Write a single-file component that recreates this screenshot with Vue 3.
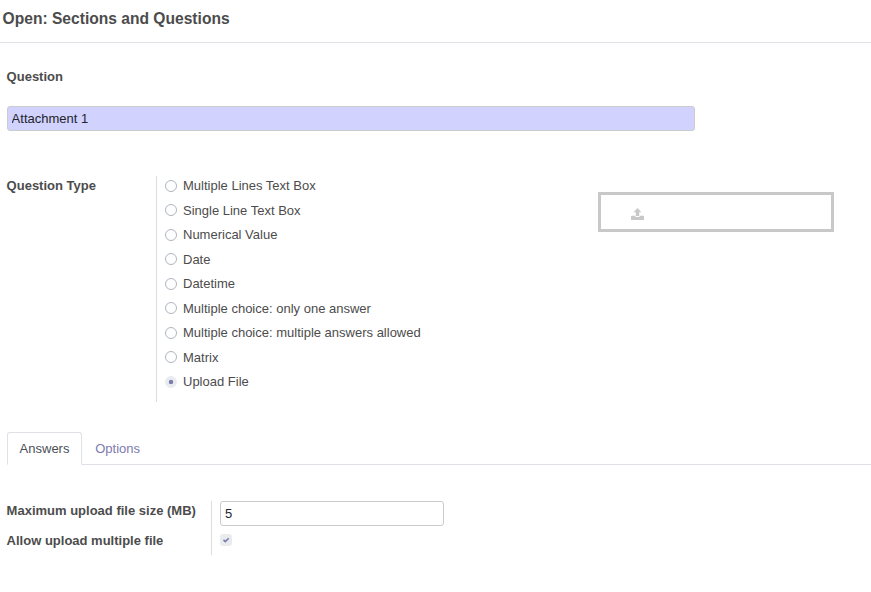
<script setup>
import { ref } from 'vue'

const title = ref('Attachment 1')
const types = [
  'Multiple Lines Text Box',
  'Single Line Text Box',
  'Numerical Value',
  'Date',
  'Datetime',
  'Multiple choice: only one answer',
  'Multiple choice: multiple answers allowed',
  'Matrix',
  'Upload File',
]
const selected = ref('Upload File')
const tabs = ['Answers', 'Options']
const activeTab = ref('Answers')
const maxSize = ref('5')
const multiple = ref(true)
</script>

<template>
  <div class="dialog">
    <header class="header">
      <h4 class="heading">Open: Sections and Questions</h4>
    </header>
    <main class="body">
      <label class="label question-label">Question</label>
      <input v-model="title" class="input required" type="text" />

      <section class="type-row">
        <div class="label type-label">Question Type</div>
        <div class="radios">
          <label v-for="t in types" :key="t" class="radio">
            <input v-model="selected" type="radio" name="type" :value="t" class="native" />
            <span class="dot" :class="{ on: selected === t }"></span>
            <span class="radio-text">{{ t }}</span>
          </label>
        </div>
        <div class="preview">
          <svg class="upload" viewBox="0 0 13 12" width="13" height="12">
            <path d="M6.5 0 L10.4 4.3 H8.2 V8 H4.8 V4.3 H2.6 Z" />
            <path d="M.6 7.8 H4 Q4.4 9 5.2 9 H7.8 Q8.6 9 9 7.8 H12.4 Q13 7.8 13 8.4 V11.4 Q13 12 12.4 12 H.6 Q0 12 0 11.4 V8.4 Q0 7.8 .6 7.8 Z" />
          </svg>
        </div>
      </section>

      <nav class="tabs">
        <a
          v-for="tab in tabs"
          :key="tab"
          class="tab"
          :class="{ active: activeTab === tab }"
          @click="activeTab = tab"
        >{{ tab }}</a>
      </nav>

      <section class="group">
        <div class="group-labels">
          <label class="label size-label">Maximum upload file size (MB)</label>
          <label class="label">Allow upload multiple file</label>
        </div>
        <div class="group-fields">
          <input v-model="maxSize" class="input size" type="text" />
          <label class="check">
            <input v-model="multiple" type="checkbox" class="native" />
            <svg v-if="multiple" viewBox="0 0 12 12" width="12" height="12">
              <path d="M3.5 5.9 L5.3 7.6 L8.7 4.2" />
            </svg>
          </label>
        </div>
      </section>
    </main>
  </div>
</template>

<style>
body {
  background: #fff;
}
</style>

<style scoped>
.dialog {
  height: 592px;
  overflow: hidden;
  font-family: "Liberation Sans", Arial, sans-serif;
  font-size: 13px;
  line-height: 20px;
  color: #4c4c4c;
}
.header {
  box-sizing: border-box;
  height: 43px;
  padding: 8px 2.6px 0;
  border-bottom: 1px solid #dee2e6;
}
.heading {
  margin: 0;
  font-size: 15.6px;
  line-height: 21px;
  font-weight: bold;
}
.body {
  padding: 24px 0 0 7px;
}
.label {
  display: block;
  margin-left: -0.4px;
  font-weight: bold;
  white-space: nowrap;
}
.question-label {
  margin-bottom: 19px;
}
.input {
  display: block;
  box-sizing: border-box;
  height: 25px;
  margin: 0;
  padding: 0 4px;
  border: 1px solid #ccc;
  border-radius: 3px;
  outline: none;
  background: #fff;
  color: #212529;
  font: inherit;
}
.required {
  width: 688px;
  padding-left: 3.6px;
  background: #d2d2ff;
}
.type-row {
  display: flex;
  align-items: flex-start;
  margin-top: 45px;
}
.type-label {
  width: 149.4px;
}
.radios {
  box-sizing: border-box;
  width: 442px;
  height: 226px;
  padding-left: 8px;
  border-left: 1px solid #ddd;
}
.radio {
  display: flex;
  align-items: center;
  gap: 6px;
  height: 19.5px;
  margin-bottom: 5px;
}
.radio-text {
  padding-top: 0.6px;
}
.native {
  display: none;
}
.dot {
  box-sizing: border-box;
  width: 12px;
  height: 12px;
  border: 1px solid #adb5bd;
  border-radius: 50%;
}
.dot.on {
  border-color: #e9ecef;
  background: radial-gradient(circle, #7c7bad 1.9px, #e9ecef 2.6px);
}
.preview {
  box-sizing: border-box;
  display: flex;
  width: 236px;
  height: 40px;
  margin-top: 16px;
  padding: 13px 30px 0;
  border: 3px solid #c8c8c8;
}
.upload {
  fill: #c8c8c8;
}
.tabs {
  display: flex;
  gap: 0.6px;
  height: 33px;
  margin-top: 30px;
  box-shadow: inset 0 -1px #dee2e6;
}
.tab {
  box-sizing: border-box;
  height: 33px;
  padding: 6px 11.6px 0;
  border: 1px solid transparent;
  border-radius: 3px 3px 0 0;
  color: #7c7bad;
  cursor: pointer;
}
.tab.active {
  border-color: #dee2e6;
  border-bottom-color: #fff;
  background: #fff;
  color: #495057;
}
.group {
  display: flex;
  margin-top: 36px;
}
.group-labels {
  width: 204px;
}
.size-label {
  margin-bottom: 10px;
}
.group-fields {
  box-sizing: border-box;
  height: 54px;
  padding-left: 8px;
  border-left: 1px solid #ddd;
}
.size {
  width: 224px;
}
.check {
  display: block;
  width: 12px;
  height: 12px;
  margin-top: 8px;
  border-radius: 3px;
  background: #e9ecef;
}
.check svg {
  display: block;
  fill: none;
  stroke: #7c7bad;
  stroke-width: 1.6;
}
</style>
